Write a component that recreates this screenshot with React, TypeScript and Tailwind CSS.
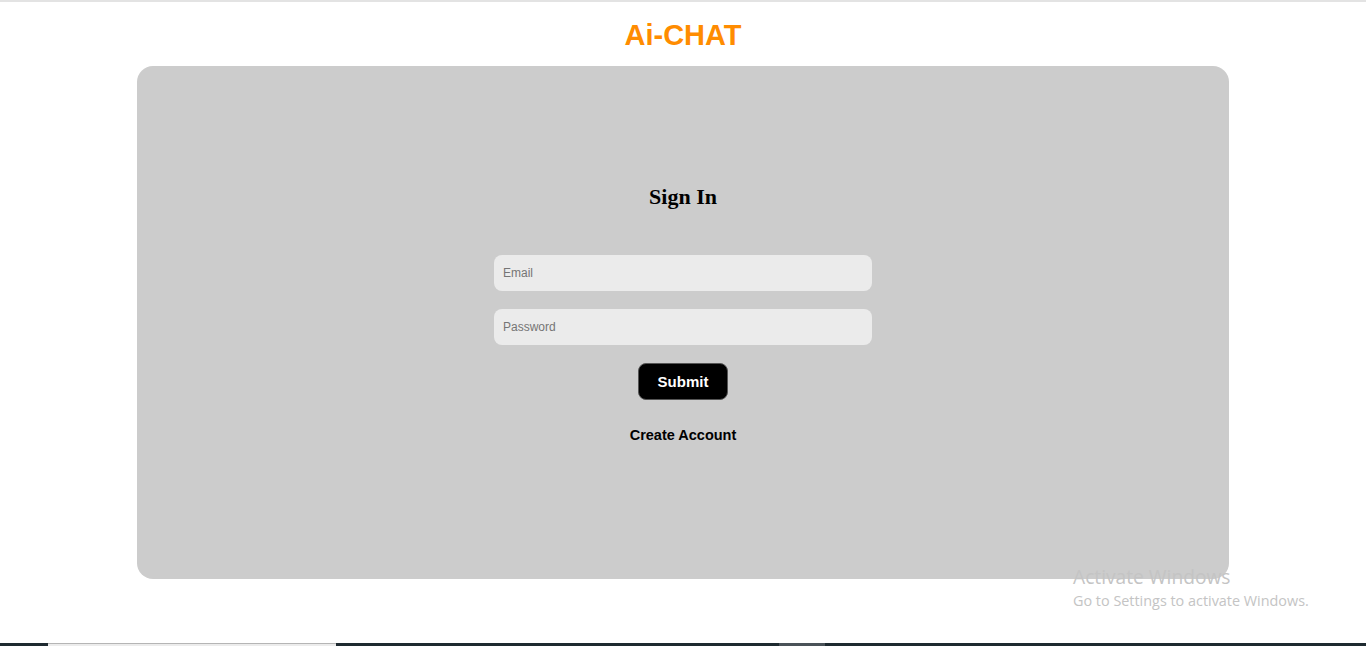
import React from "react";

export default function App() {
  return (
    <div className="relative w-[1366px] h-[646px] overflow-hidden bg-white" style={{ fontFamily: "'Liberation Sans', Arial, sans-serif" }}>
      <div className="h-[2px] bg-[#e3e3e3]" />
      <h1 className="mt-[16px] h-[34px] text-center text-[29px] leading-[34px] font-bold text-[#ff8c00]">Ai-CHAT</h1>
      <div className="mx-auto mt-[14px] w-[1092px] h-[513px] rounded-[16px] bg-[#cccccc] flex flex-col items-center pt-[117px]">
        <h2 className="text-[22px] leading-[28px] font-bold text-black" style={{ fontFamily: "'Liberation Serif', 'DejaVu Serif', serif" }}>Sign In</h2>
        <div className="mt-[44px] flex flex-col gap-[18px]">
          <input
            placeholder="Email"
            className="w-[378px] h-[36px] rounded-[8px] bg-[#ebebeb] px-[9px] text-[12px] text-black placeholder:text-[#757575] outline-none"
          />
          <input
            type="password"
            placeholder="Password"
            className="w-[378px] h-[36px] rounded-[8px] bg-[#ebebeb] px-[9px] text-[12px] text-black placeholder:text-[#757575] outline-none"
          />
        </div>
        <button className="mt-[18px] w-[90px] h-[37px] pt-[2px] rounded-[8px] bg-black border border-[#555] text-white text-[15px] font-bold">Submit</button>
        <div className="mt-[25px] text-[14.5px] leading-[20px] font-bold text-black">Create Account</div>
      </div>
      <div className="absolute left-[1073px] top-[565px] text-[#c4c4c4]" style={{ fontFamily: "'Open Sans', 'Noto Sans', sans-serif" }}>
        <div className="text-[19.2px] leading-[24px]">Activate Windows</div>
        <div className="mt-[2px] text-[14.4px] leading-[20px]">Go to Settings to activate Windows.</div>
      </div>
      <div className="absolute left-0 bottom-0 w-full h-[3px] bg-[#1e2a30] flex">
        <div className="ml-[48px] w-[288px] h-full bg-[#ececec] border-t border-[#b5b5b5]" />
        <div className="ml-[443px] w-[46px] h-full bg-[#4a5258]" />
      </div>
    </div>
  );
}
